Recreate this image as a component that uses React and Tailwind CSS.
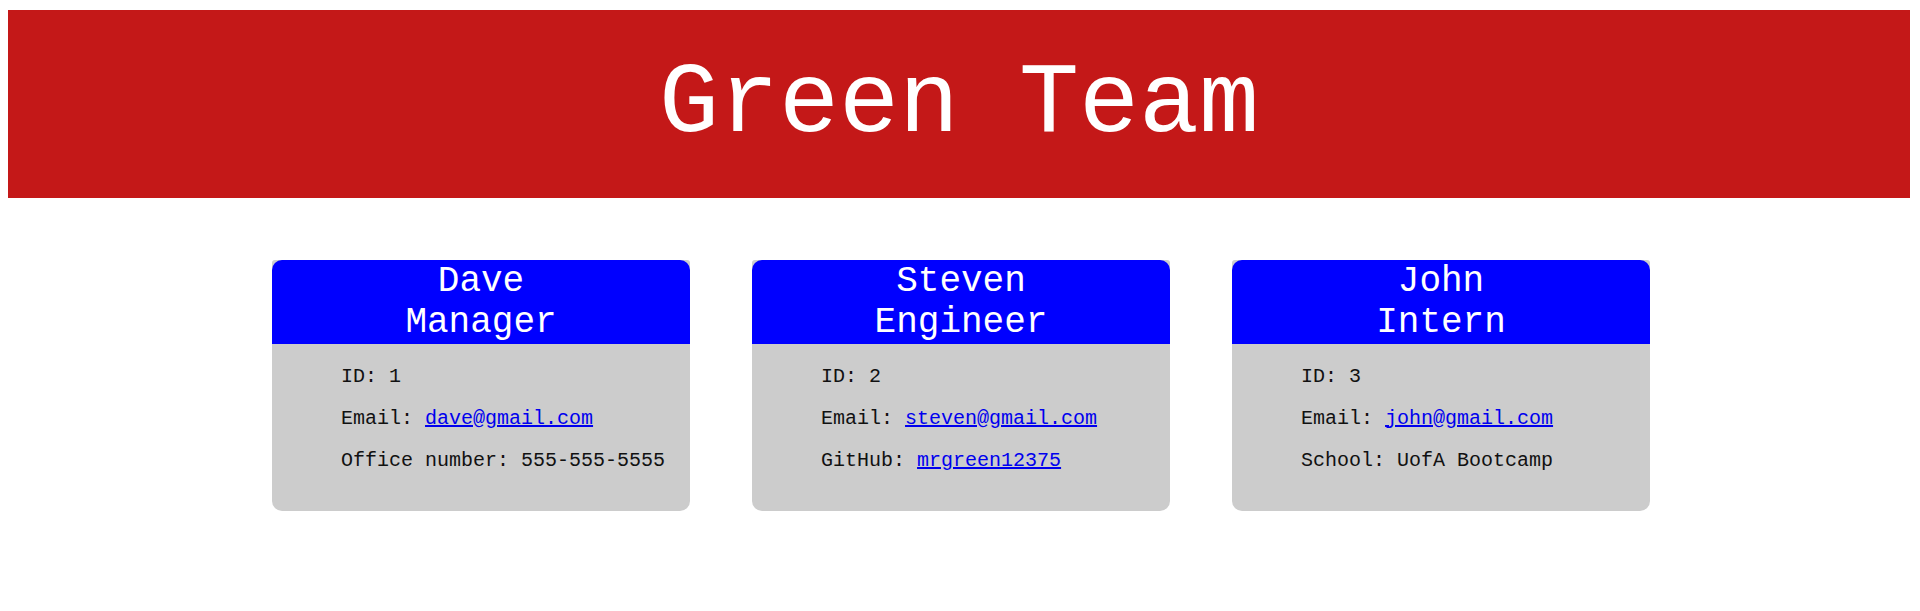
const team = [
  {
    name: 'Dave',
    role: 'Manager',
    id: 1,
    email: 'dave@gmail.com',
    extra: { label: 'Office number', value: '555-555-5555' },
  },
  {
    name: 'Steven',
    role: 'Engineer',
    id: 2,
    email: 'steven@gmail.com',
    extra: { label: 'GitHub', value: 'mrgreen12375', link: true },
  },
  {
    name: 'John',
    role: 'Intern',
    id: 3,
    email: 'john@gmail.com',
    extra: { label: 'School', value: 'UofA Bootcamp' },
  },
];

function MemberCard({ member }) {
  return (
    <div className="w-[418px] bg-[#cccccc] rounded-b-[10px] rounded-t-[3px]">
      <div className="bg-[#0000ff] rounded-t-[10px] pt-[2px] text-center text-white text-[36px] leading-[40.8px]">
        <p>{member.name}</p>
        <p>{member.role}</p>
      </div>

      <ul className="flex flex-col pl-[69px] pt-[12px] pb-[29px] text-[20px] leading-[42px] text-[#111]">
        <li>ID: {member.id}</li>
        <li>
          Email:{' '}
          <a href={`mailto:${member.email}`} className="text-[#0000ee] underline">
            {member.email}
          </a>
        </li>
        <li>
          {member.extra.label}:{' '}
          {member.extra.link ? (
            <a href="#" className="text-[#0000ee] underline">
              {member.extra.value}
            </a>
          ) : (
            member.extra.value
          )}
        </li>
      </ul>
    </div>
  );
}

export default function App() {
  return (
    <div className="min-h-[611px] bg-white pt-[10px] font-['Liberation_Mono','Courier_New',monospace]">
      <header className="ml-[8px] mr-[10px] h-[188px] bg-[#c41818] flex items-center justify-center">
        <h1 className="text-white text-[100px] leading-[113px]">Green Team</h1>
      </header>

      <main className="flex justify-center gap-[62px] mt-[62px] pl-[2px]">
        {team.map((member) => (
          <MemberCard key={member.id} member={member} />
        ))}
      </main>
    </div>
  );
}
